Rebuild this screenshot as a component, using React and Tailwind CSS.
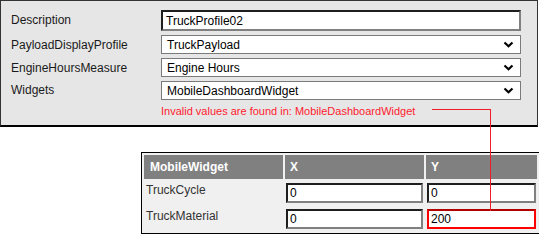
import React from 'react';

function Chevron() {
  return (
    <svg width="11" height="7" viewBox="0 0 11 7" className="shrink-0">
      <path d="M1.5 1.5 L5.5 5.2 L9.5 1.5" fill="none" stroke="#000" strokeWidth="2.2" />
    </svg>
  );
}

function Select({ value }) {
  return (
    <div className="flex h-[19px] w-[360px] items-center justify-between border border-[#7a7a7a] bg-white pl-[5px] pr-[6px] text-[12px] text-black">
      <span>{value}</span>
      <Chevron />
    </div>
  );
}

function Field({ value, invalid }) {
  return (
    <div
      className={`flex h-[20px] w-full items-center border-2 pl-[2px] text-[12px] text-black bg-white ${
        invalid
          ? 'border-[#ff0000] border-t-[#b00000]'
          : 'border-[#808080] border-t-[#1e1e1e] border-l-[#1e1e1e]'
      }`}
    >
      {value}
    </div>
  );
}

export default function App() {
  const rows = [
    { name: 'TruckCycle', x: '0', y: '0' },
    { name: 'TruckMaterial', x: '0', y: '200', invalid: true },
  ];

  return (
    <div className="relative h-[237px] w-[539px] bg-white font-['Liberation_Sans',Arial,sans-serif] text-[12px] text-[#1a1a1a]">
      {/* Form panel */}
      <div className="h-[127px] w-[538px] border border-[#333] border-b-2 border-b-black bg-[#e6e6e6] pl-[10px] pt-[9px]">
        <div className="flex items-start">
          <div className="w-[150px] pt-[1px]">Description</div>
          <div className="flex h-[21px] w-[360px] items-center border-2 border-[#808080] border-t-[#1e1e1e] border-l-[#1e1e1e] bg-white pl-[3px] text-[12px] text-black">
            TruckProfile02
          </div>
        </div>
        <div className="mt-[4px] flex items-start">
          <div className="w-[150px] pt-[1px]">PayloadDisplayProfile</div>
          <Select value="TruckPayload" />
        </div>
        <div className="mt-[4px] flex items-start">
          <div className="w-[150px] pt-[1px]">EngineHoursMeasure</div>
          <Select value="Engine Hours" />
        </div>
        <div className="mt-[4px] flex items-start">
          <div className="w-[150px]">Widgets</div>
          <Select value="MobileDashboardWidget" />
        </div>
        <div className="ml-[150px] mt-[3px] text-[11px] text-[#ff1a2e]">
          Invalid values are found in: MobileDashboardWidget
        </div>
      </div>

      {/* Widget table */}
      <div className="ml-[141px] mt-[25px] w-[398px]">
        <table className="w-[397px] table-fixed border-separate border-spacing-[2px] border border-black bg-[#f0f0f0]">
          <colgroup>
            <col className="w-[139px]" />
            <col className="w-[139px]" />
            <col className="w-[111px]" />
          </colgroup>
          <thead>
            <tr className="h-[24px] bg-[#808080] text-left text-[12px] font-bold text-white">
              <th className="pl-[6px] font-bold">MobileWidget</th>
              <th className="pl-[5px] font-bold">X</th>
              <th className="pl-[5px] font-bold">Y</th>
            </tr>
          </thead>
          <tbody>
            {rows.map((r) => (
              <tr key={r.name} className="h-[24px]">
                <td className="px-[2px] align-top text-[#333]">{r.name}</td>
                <td className="p-[1px]">
                  <Field value={r.x} />
                </td>
                <td className="p-[1px]">
                  <Field value={r.y} invalid={r.invalid} />
                </td>
              </tr>
            ))}
          </tbody>
        </table>
      </div>

      {/* Connector from error message to invalid cell */}
      <div className="absolute left-[432px] top-[109px] h-px w-[59px] bg-[#ee1c25]" />
      <div className="absolute left-[490px] top-[109px] h-[102px] w-px bg-[#ee1c25]" />
    </div>
  );
}
